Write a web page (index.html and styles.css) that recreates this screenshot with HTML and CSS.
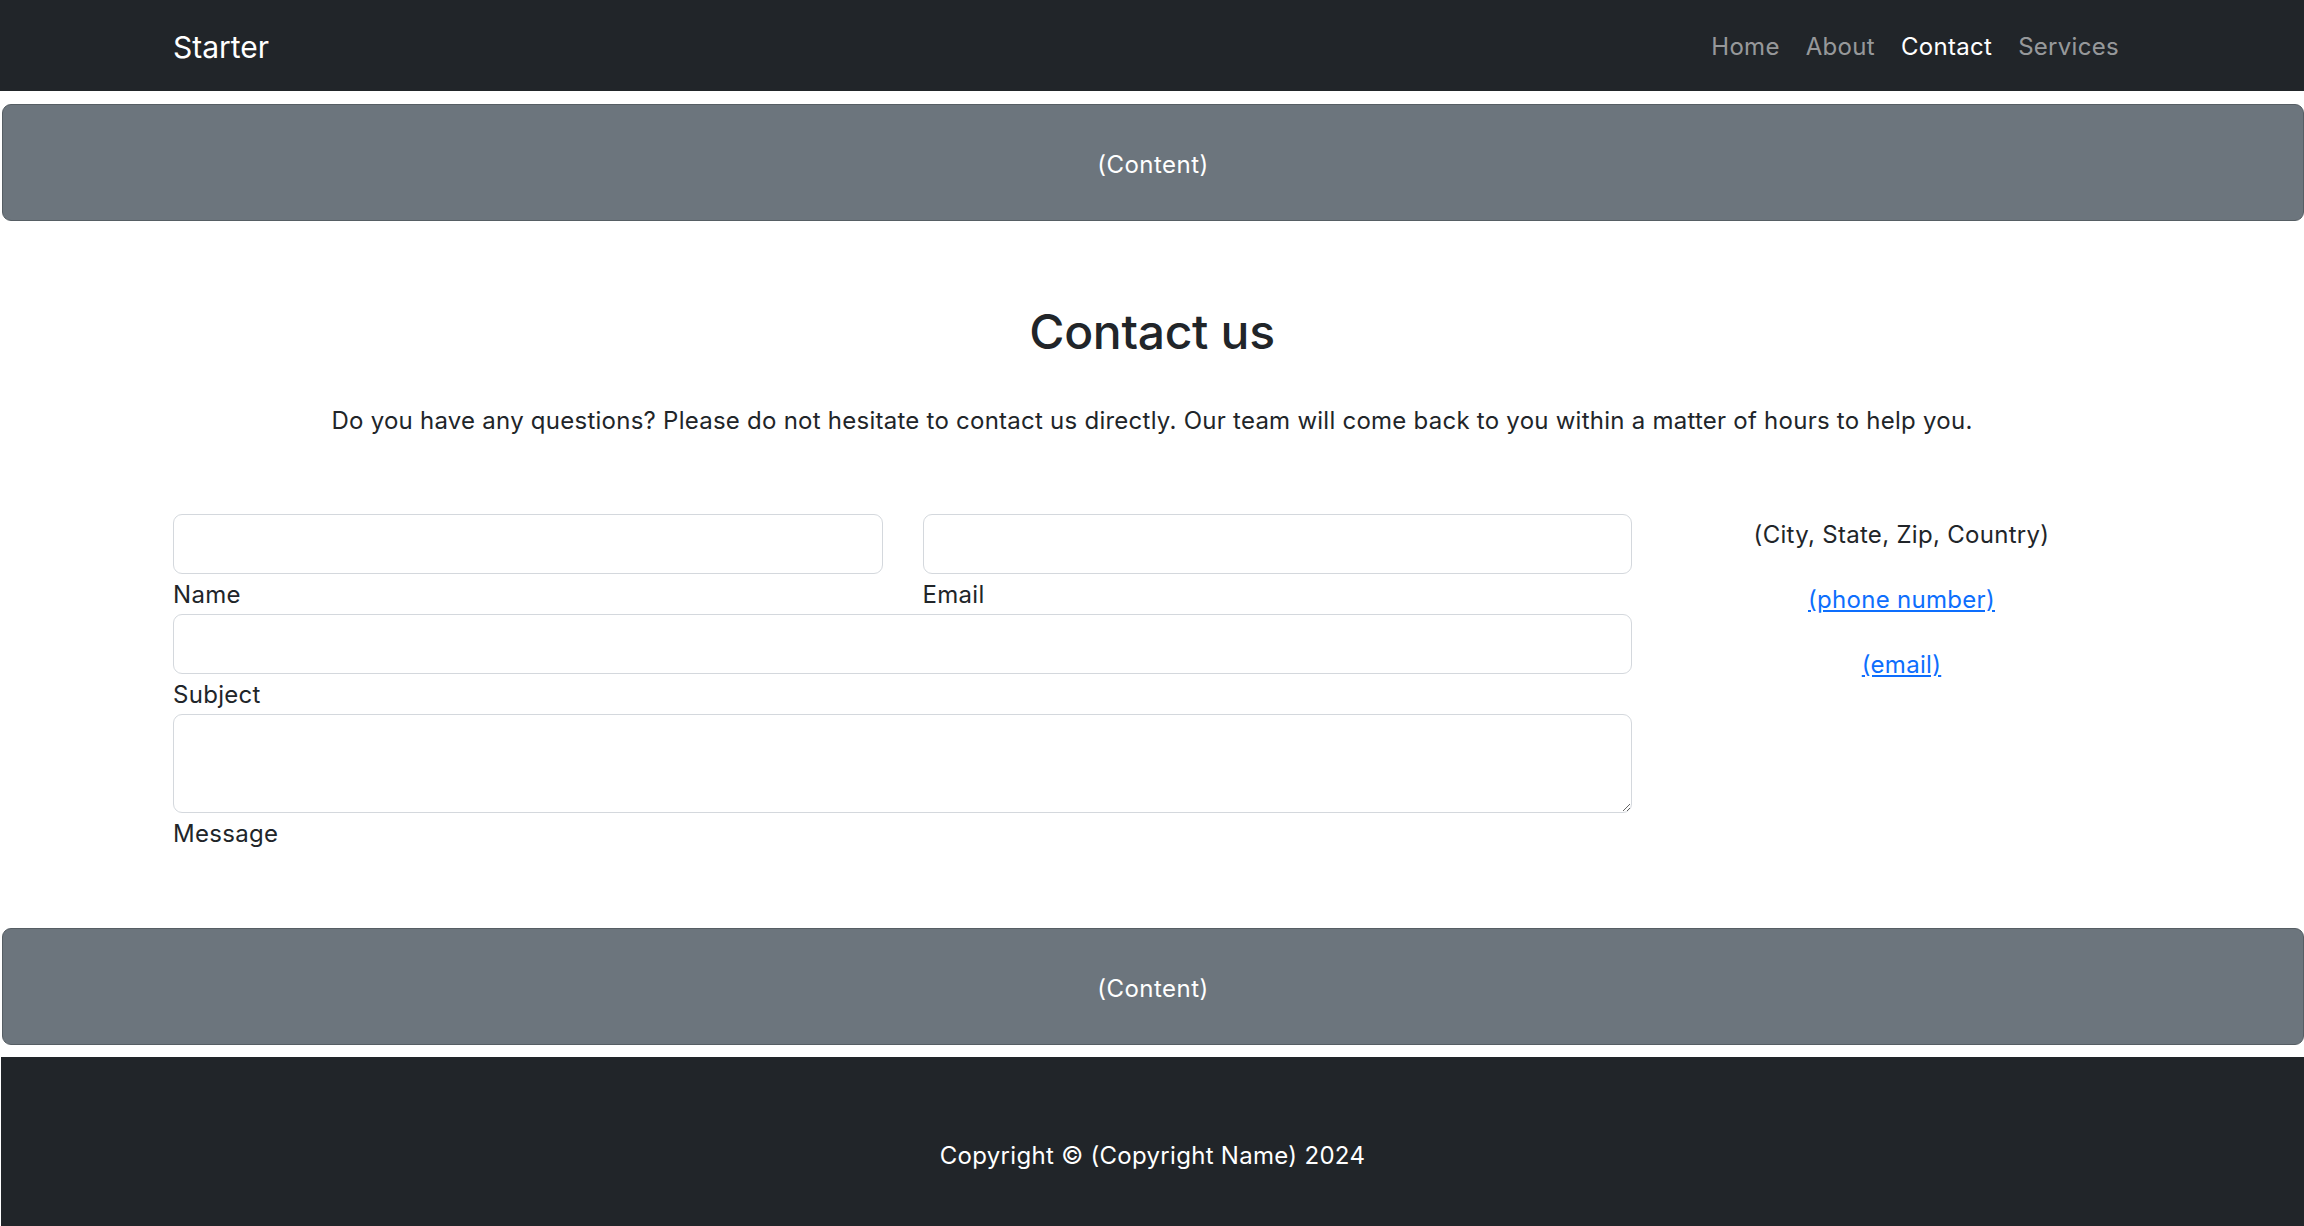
FILE: index.html
```html
<!DOCTYPE html>
<html lang="en">
<head>
<meta charset="utf-8">
<title>Starter - Contact</title>
<link rel="stylesheet" href="styles.css">
</head>
<body>
<nav class="navbar">
  <div class="container nav-inner">
    <a class="brand" href="#">Starter</a>
    <ul class="nav-links">
      <li><a class="nav-link" href="#">Home</a></li>
      <li><a class="nav-link" href="#">About</a></li>
      <li><a class="nav-link active" href="#">Contact</a></li>
      <li><a class="nav-link" href="#">Services</a></li>
    </ul>
  </div>
</nav>

<div class="banner banner-top">(Content)</div>

<section class="contact container">
  <h2 class="contact-title">Contact us</h2>
  <p class="contact-lead">Do you have any questions? Please do not hesitate to contact us directly. Our team will come back to you within a matter of hours to help you.</p>

  <div class="contact-row">
    <form class="contact-form">
      <div class="form-pair">
        <div class="field">
          <input class="form-control" type="text" id="name">
          <label for="name">Name</label>
        </div>
        <div class="field">
          <input class="form-control" type="email" id="email">
          <label for="email">Email</label>
        </div>
      </div>
      <div class="field">
        <input class="form-control" type="text" id="subject">
        <label for="subject">Subject</label>
      </div>
      <div class="field">
        <textarea class="form-control textarea" id="message"></textarea>
        <label for="message">Message</label>
      </div>
    </form>

    <ul class="contact-info">
      <li>(City, State, Zip, Country)</li>
      <li><a href="#">(phone number)</a></li>
      <li><a href="#">(email)</a></li>
    </ul>
  </div>
</section>

<div class="banner banner-bottom">(Content)</div>

<footer class="footer">Copyright © (Copyright Name) 2024</footer>
</body>
</html>
```

FILE: styles.css
```css
* {
  box-sizing: border-box;
}

html, body {
  margin: 0;
  padding: 0;
}

body {
  font-family: Inter, "Noto Sans", "Liberation Sans", sans-serif;
  font-size: 24px;
  line-height: 36px;
  letter-spacing: 0.3px;
  color: #212529;
  background: #ffffff;
  overflow: hidden;
}

.container {
  width: 1958px;
  margin: 0 auto;
}

/* Navbar */
.navbar {
  background: #212529;
  height: 91px;
}

.nav-inner {
  height: 100%;
  padding-top: 3px;
  display: flex;
  align-items: center;
  justify-content: space-between;
}

.brand {
  color: #ffffff;
  text-decoration: none;
  font-size: 30px;
  line-height: 45px;
  letter-spacing: 0;
}

.nav-links {
  list-style: none;
  margin: 0;
  padding: 0;
  display: flex;
}

.nav-link {
  display: block;
  padding: 0 13px;
  color: rgba(255, 255, 255, 0.55);
  text-decoration: none;
  font-size: 24px;
  line-height: 36px;
}

.nav-links li:last-child .nav-link {
  padding-right: 12px;
}

.nav-link.active {
  color: #ffffff;
}

/* Banners */
.banner {
  margin-left: 2px;
  background: #6c757d;
  border: 1.5px solid #565e64;
  border-radius: 9px;
  color: #ffffff;
  text-align: center;
  padding: 41px 0 37px;
  line-height: 37px;
  letter-spacing: 0.5px;
}

.banner-top {
  margin-top: 13px;
}

.banner-bottom {
  margin-top: 76px;
}

/* Contact section */
.contact {
  padding-top: 82px;
}

.contact-title {
  margin: 0 0 42px;
  text-align: center;
  font-size: 48px;
  line-height: 58px;
  font-weight: 500;
  letter-spacing: -0.3px;
}

.contact-lead {
  margin: 0 0 75px;
  text-align: center;
  letter-spacing: 0.25px;
}

.contact-row {
  display: flex;
  gap: 40px;
}

.contact-form {
  width: 1459px;
  flex: none;
  display: flex;
  flex-direction: column;
  gap: 1px;
}

.form-pair {
  display: flex;
  gap: 40px;
}

.form-pair .field {
  flex: 1;
}

.field {
  display: flex;
  flex-direction: column;
}

.field label {
  display: block;
  padding-top: 3px;
  line-height: 36px;
}

.form-control {
  display: block;
  width: 100%;
  height: 60px;
  border: 1.5px solid #d4d8dd;
  border-radius: 9px;
  background: #ffffff;
  font: inherit;
  padding: 9px 18px;
}

.textarea {
  height: 99px;
  resize: vertical;
}

.contact-info {
  flex: 1;
  list-style: none;
  margin: 0;
  padding: 3px 0 0;
  text-align: center;
  display: flex;
  flex-direction: column;
  gap: 29px;
}

.contact-info a {
  color: #0d6efd;
  text-decoration: underline;
}

/* Footer */
.footer {
  margin-top: 12px;
  margin-left: 1px;
  background: #212529;
  color: #ffffff;
  text-align: center;
  padding: 81px 0 60px;
  line-height: 36px;
}
```
